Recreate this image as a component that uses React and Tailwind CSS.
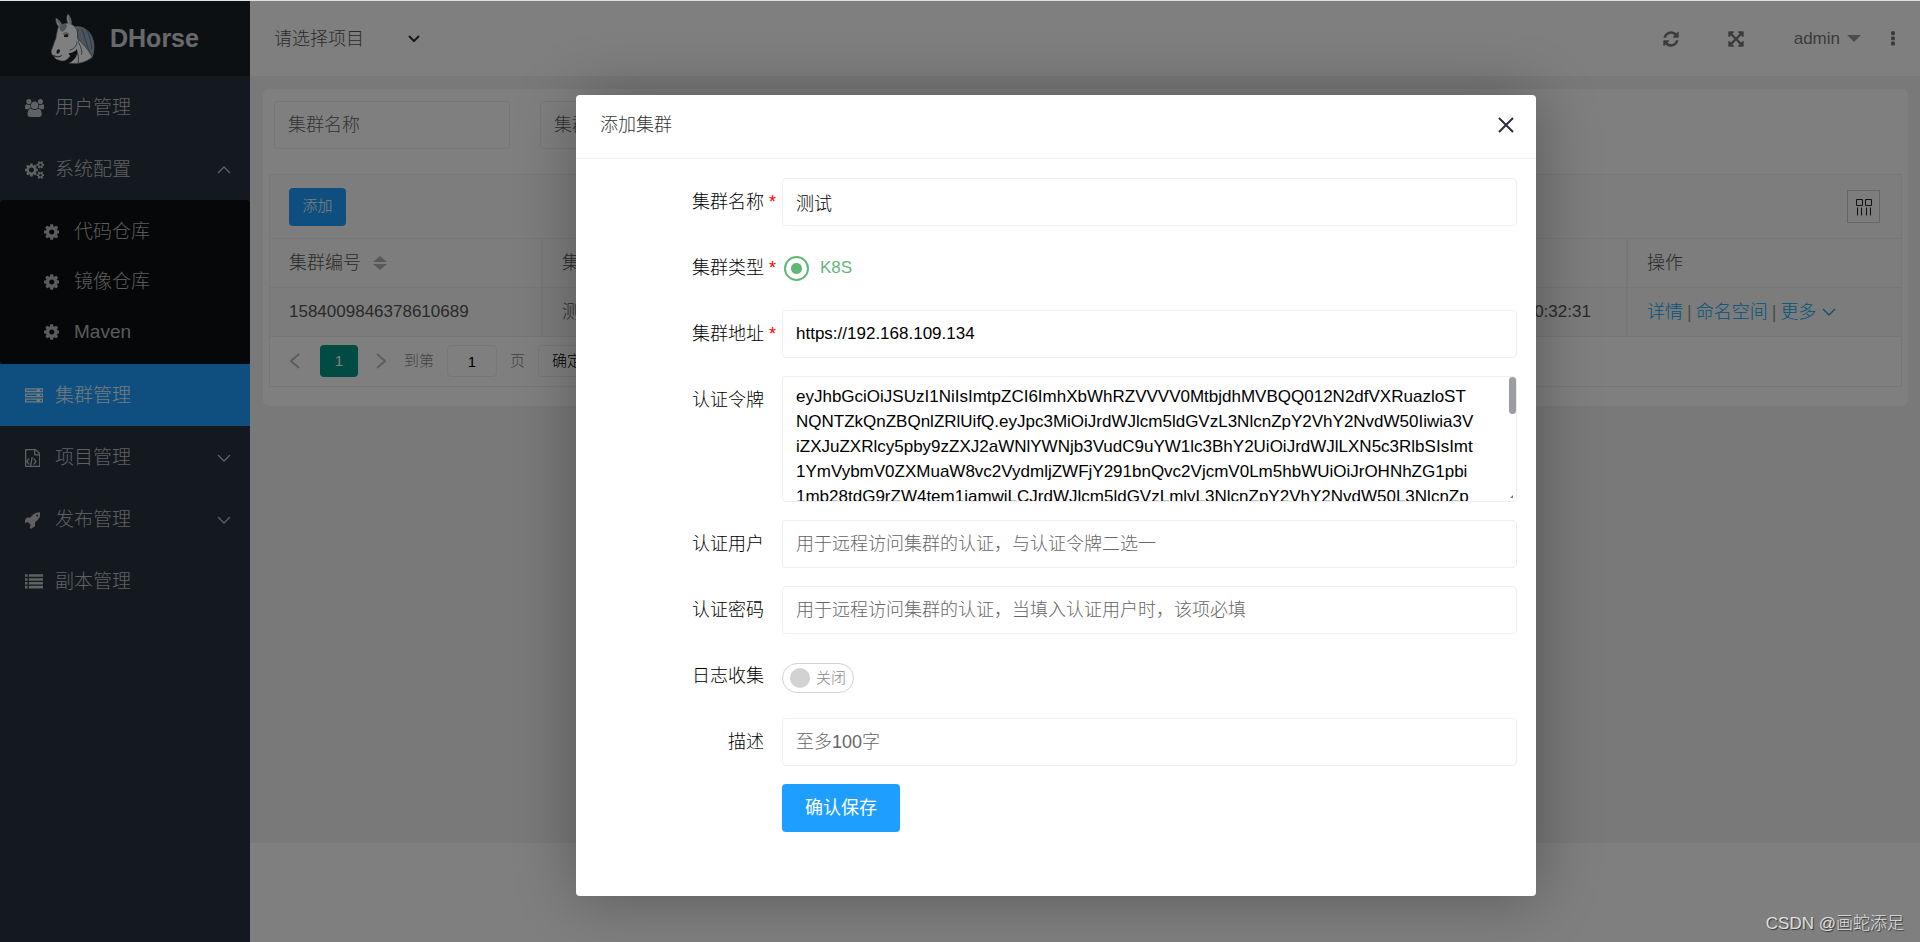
import { useState } from "react";

// ----- icon paths -----
const GEAR = "M1152 896q0-106-75-181t-181-75-181 75-75 181 75 181 181 75 181-75 75-181zm512-109v222q0 12-8 23t-20 13l-185 28q-19 54-39 91 35 50 107 138 10 12 10 25t-9 23q-27 37-99 108t-94 71q-12 0-26-9l-138-108q-44 23-91 38-16 136-29 186-7 28-36 28h-222q-14 0-24.5-8.5t-11.5-21.5l-28-184q-49-16-90-37l-141 107q-10 9-25 9-14 0-25-11-126-114-165-168-7-10-7-23 0-12 8-23 15-21 51-66.5t54-70.5q-27-50-41-99l-183-27q-13-2-21-12.5t-8-23.5v-222q0-12 8-23t19-13l186-28q14-46 39-92-40-57-107-138-10-12-10-24 0-10 9-23 26-36 98.500-107.500t94.500-71.500q13 0 26 10l138 107q44-23 91-38 16-136 29-186 7-28 36-28h222q14 0 24.500 8.500t11.500 21.500l28 184q49 16 90 37l142-107q9-9 24-9 13 0 25 10 129 119 165 170 7 8 7 22 0 12-8 23-15 21-51 66.500t-54 70.500q26 50 41 98l183 28q13 2 21 12.500t8 23.500z";
const COGS = "M896 896q0-106-75-181t-181-75-181 75-75 181 75 181 181 75 181-75 75-181zm768 512q0-52-38-90t-90-38-90 38-38 90q0 53 37.500 90.500t90.500 37.500 90.500-37.500 37.500-90.500zm0-1024q0-52-38-90t-90-38-90 38-38 90q0 53 37.500 90.500t90.500 37.500 90.500-37.500 37.500-90.500zm-384 421v185q0 10-7 19.500t-16 10.500l-155 24q-11 35-32 76 34 48 90 115 7 11 7 20 0 12-7 19-23 30-82.500 89.500t-78.500 59.500q-11 0-21-7l-115-90q-37 19-77 31-11 108-23 155-7 24-30 24h-186q-11 0-20-7.500t-10-17.500l-23-153q-34-10-75-31l-118 89q-7 7-20 7-11 0-21-8-144-133-144-160 0-9 7-19 10-14 41-53t47-61q-23-44-35-82l-152-24q-10-1-17-9.500t-7-19.500v-185q0-10 7-19.500t16-10.500l155-24q11-35 32-76-34-48-90-115-7-11-7-20 0-12 7-20 22-30 82-89t79-59q11 0 21 7l115 90q34-18 77-32 11-108 23-154 7-24 30-24h186q11 0 20 7.500t10 17.500l23 153q34 10 75 31l118-89q8-7 20-7 11 0 21 8 144 133 144 160 0 8-7 19-12 16-42 54t-45 60q23 48 34 82l152 23q10 2 17 10.500t7 19.500zm640 533v140q0 16-149 31-12 27-30 52 51 113 51 138 0 4-4 7-122 71-124 71-8 0-46-47t-52-68q-20 2-30 2t-30-2q-14 21-52 68t-46 47q-2 0-124-71-4-3-4-7 0-25 51-138-18-25-30-52-149-15-149-31v-140q0-16 149-31 13-29 30-52-51-113-51-138 0-4 4-7 4-2 35-20t59-34 30-16q8 0 46 46.500t52 67.500q20-2 30-2t30 2q51-71 92-112l6-2q4 0 124 70 4 3 4 7 0 25-51 138 17 23 30 52 149 15 149 31zm0-1024v140q0 16-149 31-12 27-30 52 51 113 51 138 0 4-4 7-122 71-124 71-8 0-46-47t-52-68q-20 2-30 2t-30-2q-14 21-52 68t-46 47q-2 0-124-71-4-3-4-7 0-25 51-138-18-25-30-52-149-15-149-31v-140q0-16 149-31 13-29 30-52-51-113-51-138 0-4 4-7 4-2 35-20t59-34 30-16q8 0 46 46.500t52 67.500q20-2 30-2t30 2q51-71 92-112l6-2q4 0 124 70 4 3 4 7 0 25-51 138 17 23 30 52 149 15 149 31z";
const USERS = "M593 896q-162 5-265 128h-134q-82 0-138-40.500t-56-118.500q0-353 124-353 6 0 43.500 21t97.500 42.500 119 21.500q67 0 133-23-5 37-5 66 0 139 81 256zm1071 637q0 120-73 189.500t-194 69.500h-874q-121 0-194-69.500t-73-189.500q0-53 3.500-103.500t14-109 26.500-108.500 43-97.500 62-81 85.500-53.500 111.500-20q10 0 43 21.500t73 48 107 48 135 21.500 135-21.500 107-48 73-48 43-21.500q61 0 111.500 20t85.500 53.500 62 81 43 97.500 26.500 108.500 14 109 3.500 103.500zm-1024-1277q0 106-75 181t-181 75-181-75-75-181 75-181 181-75 181 75 75 181zm704 384q0 159-112.500 271.500t-271.500 112.500-271.500-112.500-112.500-271.500 112.500-271.500 271.500-112.500 271.500 112.500 112.500 271.500zm576 225q0 78-56 118.500t-138 40.500h-134q-103-123-265-128 81-117 81-256 0-29-5-66 66 23 133 23 59 0 119-21.500t97.500-42.500 43.500-21q124 0 124 353zm-128-609q0 106-75 181t-181 75-181-75-75-181 75-181 181-75 181 75 75 181z";
const SERVER = "M128 1408h1024v-128h-1024v128zm0-512h1024v-128h-1024v128zm1568 448q0-40-28-68t-68-28-68 28-28 68 28 68 68 28 68-28 28-68zm-1568-960h1024v-128h-1024v128zm1568 448q0-40-28-68t-68-28-68 28-28 68 28 68 68 28 68-28 28-68zm0-512q0-40-28-68t-68-28-68 28-28 68 28 68 68 28 68-28 28-68zm96 832v384h-1792v-384h1792zm0-512v384h-1792v-384h1792zm0-512v384h-1792v-384h1792z";
const FILE_CODE = "M1596 476q28 28 48 76t20 88v1152q0 40-28 68t-68 28h-1344q-40 0-68-28t-28-68v-1600q0-40 28-68t68-28h896q40 0 88 20t76 48zm-444-244v376h376q-10-29-22-41l-313-313q-12-12-41-22zm384 1528v-1024h-416q-40 0-68-28t-28-68v-416h-768v1536h1280zm-1056-736q8-11 21-12.500t24 6.500l51 38q11 8 12.500 21t-6.500 24l-182 243 182 243q8 11 6.500 24t-12.500 21l-51 38q-11 8-24 6.500t-21-12.500l-226-301q-14-19 0-38zm802 301q14 19 0 38l-226 301q-8 11-21 12.500t-24-6.500l-51-38q-11-8-12.500-21t6.500-24l182-243-182-243q-8-11-6.500-24t12.500-21l51-38q11-8 24-6.500t21 12.500zm-620 461q-13-2-20.500-13t-5.500-24l138-831q2-13 13-20.500t24-5.500l63 10q13 2 20.500 13t5.500 24l-138 831q-2 13-13 20.500t-24 5.500z";
const ROCKET = "M1440 448q0-40-28-68t-68-28-68 28-28 68 28 68 68 28 68-28 28-68zm224-288q0 249-75.500 430.500t-253.500 360.500q-81 80-195 176l-20 379q-2 16-16 26l-384 224q-7 4-16 4-12 0-23-9l-64-64q-13-14-8-32l85-276-281-281-276 85q-3 1-9 1-14 0-23-9l-64-64q-17-19-5-39l224-384q10-14 26-16l379-20q96-114 176-195 188-187 358-258t431-71q14 0 24 9.500t10 22.500z";
const LIST = "M0 1280h256v256h-256zM0 896h256v256h-256zM0 512h256v256h-256zM0 128h256v256h-256zM384 1280h1408v256h-1408zM384 896h1408v256h-1408zM384 512h1408v256h-1408zM384 128h1408v256h-1408z";
const REFRESH = "M1639 1056q0 5-1 7-64 268-268 434.500t-478 166.500q-146 0-282.500-55t-243.500-157l-129 129q-19 19-45 19t-45-19-19-45v-448q0-26 19-45t45-19h448q26 0 45 19t19 45-19 45l-137 137q71 66 161 102t187 36q134 0 250-65t186-179q11-17 53-117 8-23 30-23h192q13 0 22.500 9.500t9.500 22.500zm25-800v448q0 26-19 45t-45 19h-448q-26 0-45-19t-19-45 19-45l138-138q-148-137-349-137-134 0-250 65t-186 179q-11 17-53 117-8 23-30 23h-199q-13 0-22.500-9.500t-9.500-22.500v-7q65-268 270-434.500t480-166.500q146 0 284 55.500t245 156.500l130-129q19-19 45-19t45 19 19 45z";
const EXPAND = "M1411 541l-355 355 355 355 144-144q29-31 70-14 39 17 39 59v448q0 26-19 45t-45 19h-448q-42 0-59-40-17-39 14-69l144-144-355-355-355 355 144 144q31 30 14 69-17 40-59 40h-448q-26 0-45-19t-19-45v-448q0-42 40-59 39-17 69 14l144 144 355-355-355-355-144 144q-19 19-45 19-12 0-24-5-40-17-40-59v-448q0-26 19-45t45-19h448q42 0 59 40 17 39-14 69l-144 144 355 355 355-355-144-144q-31-30-14-69 17-40 59-40h448q26 0 45 19t19 45v448q0 42-39 59-13 5-25 5-26 0-45-19z";
const DOTS = "M1088 1248v192q0 40-28 68t-68 28h-192q-40 0-68-28t-28-68v-192q0-40 28-68t68-28h192q40 0 68 28t28 68zm0-512v192q0 40-28 68t-68 28h-192q-40 0-68-28t-28-68v-192q0-40 28-68t68-28h192q40 0 68 28t28 68zm0-512v192q0 40-28 68t-68 28h-192q-40 0-68-28t-28-68v-192q0-40 28-68t68-28h192q40 0 68 28t28 68z";

const TOKEN = `eyJhbGciOiJSUzI1NiIsImtpZCI6ImhXbWhRZVVVV0MtbjdhMVBQQ012N2dfVXRuazloST
NQNTZkQnZBQnlZRlUifQ.eyJpc3MiOiJrdWJlcm5ldGVzL3NlcnZpY2VhY2NvdW50Iiwia3V
iZXJuZXRlcy5pby9zZXJ2aWNlYWNjb3VudC9uYW1lc3BhY2UiOiJrdWJlLXN5c3RlbSIsImt
1YmVybmV0ZXMuaW8vc2VydmljZWFjY291bnQvc2VjcmV0Lm5hbWUiOiJrOHNhZG1pbi
1mb28tdG9rZW4tem1jamwiLCJrdWJlcm5ldGVzLmlvL3NlcnZpY2VhY2NvdW50L3NlcnZp
Y2UtYWNjb3VudC5uYW1lIjoiazhzYWRtaW4tbW9vIiwia3ViZXJuZXRlcy5pby9zZXJ2aWN
lYWNjb3VudC9zZXJ2aWNlLWFjY291bnQudWlkIjoiNmE1ZjQxYjAtZDRlYi00YzI3LWI
5YjQtMWM3ZDI4MGY5ZTRhIiwic3ViIjoic3lzdGVtOnNlcnZpY2VhY2NvdW50Omt1YmUt
c3lzdGVtOms4c2FkbWluLW1vbyJ9.Qk1yZ0hXc2pYb2VfM2tVdHhLd0p6bVZSN3B
MYXZGY0V5dU5iZ1FhS2lTNHJPdGhEMW1Xa0ZzY1lQeEJ2Z0p6UnE3bE5oVWVD
b0lmNXdUZEFtS3JYcDJ5RXZTajhHbkhiUWNMdVpvTWlWdEZrNldhWXhQZ0RzSnI
zQmVOaFVsQ3FUMG1Jdkt5UjlwT2ZYd0VzQWo3Z0hiVm5aY0x1RGlNdEprUTRhWX
BHckZ4U29CZVdobFBDcVU1bVR2SXlOMUtmWGREc1JqOEFnSGJPblpjRXVMaVZ0
TWtZN2FRcEdyV3hGb1NlSmhsQkNxUA`;

function Icon({ d, box = "0 0 1792 1792", className = "size-[18px]" }) {
    return (
        <svg viewBox={box} className={className} fill="currentColor" aria-hidden="true">
            <path d={d} />
        </svg>
    );
}

function Chevron({ className, d = "M1 1l6 6 6-6", box = "0 0 14 8", width = 1.3 }) {
    return (
        <svg viewBox={box} className={className} fill="none" stroke="currentColor" strokeWidth={width} aria-hidden="true">
            <path d={d} />
        </svg>
    );
}

function HorseLogo() {
    return (
        <svg viewBox="150 42 140 156" className="h-[52px] w-[46px]" aria-hidden="true">
            {/* hriva vzadu */}
            <path d="M222 82c30-6 54 14 61 44 4 18 2 38-5 52l-8 4-36-62z" fill="#94abbc" />
            <path d="M246 88c10 22 14 50 30 84M262 92c10 20 14 40 16 60" stroke="#5d7383" strokeWidth="3" fill="none" />
            {/* hlava a krk */}
            <path
                d="M176 82c-6-8-10-18-8-26 8 4 15 12 18 20 6-3 12-4 18-4-4-10-4-20 0-28 8 6 13 20 12 32 14 6 20 22 18 40 12 18 34 36 44 58-16 18-42 22-70 20 12-10 20-16 20-28-12 4-20 8-24 14-8 8-18 8-28 4-8-1-12-5-13-12-8-2-10-10-9-16 6-14 8-26 14-38 2-12 4-26 8-36z"
                fill="#fff"
                stroke="#62727e"
                strokeWidth="2"
            />
            <path d="M180 78c8-5 18-5 22 0-2 10-8 18-16 20-6-4-9-10-6-20z" fill="#94abbc" />
            <path d="M172 62c4 4 8 10 9 16M207 52c4 8 5 16 4 24" stroke="#9aa6ae" strokeWidth="4" fill="none" />
            <path d="M236 90c-4 14-2 28 2 40M232 128c0 14-10 22-22 26M238 132c8 16 10 26 8 36M232 158c4 10 6 20 4 34" stroke="#5d7383" strokeWidth="3" fill="none" />
            <path d="M206 164c14-2 24-8 26-14 4 18-4 32-22 42 4-10 6-18-4-28z" fill="#192027" />
            <ellipse cx="199" cy="110" rx="7" ry="5" fill="#2a343c" />
            <path d="M190 104c6-4 14-3 18 2" stroke="#2a343c" strokeWidth="2" fill="none" />
            <ellipse cx="175" cy="158" rx="5" ry="7" fill="#2a343c" transform="rotate(30 175 158)" />
            <path d="M162 170c8 6 16 6 24 0" stroke="#2a343c" strokeWidth="3" fill="none" />
        </svg>
    );
}

function MenuItem({ icon, box, label, arrow, active }) {
    return (
        <a
            href="#"
            className={
                active
                    ? "flex h-[62px] items-center bg-[#1E9FFF] px-[25px] pt-0.5 text-white/90"
                    : "flex h-[62px] items-center px-[25px] pt-0.5 text-white/70"
            }
        >
            <span className="w-[30px]">
                <Icon d={icon} box={box} className="h-[18px] w-auto" />
            </span>
            <span className="flex-1">{label}</span>
            {arrow === "up" && <Chevron className="mr-[-6px] h-2 w-3.5" d="M1 7l6-6 6 6" />}
            {arrow === "down" && <Chevron className="mr-[-6px] h-2 w-3.5" />}
        </a>
    );
}

function Sidebar() {
    return (
        <aside className="w-[250px] shrink-0 bg-[#28333E] text-[19px]">
            <div className="flex h-[75px] items-center gap-[14px] bg-[#192027] pl-[50px] text-white/80">
                <HorseLogo />
                <h1 className="text-[25px] font-bold">DHorse</h1>
            </div>
            <nav>
                <MenuItem icon={USERS} box="0 0 1920 1792" label="用户管理" />
                <MenuItem icon={COGS} box="0 0 1920 1792" label="系统配置" arrow="up" />
                <div className="rounded-sm bg-black/70 py-[7px]">
                    {["代码仓库", "镜像仓库", "Maven"].map((label) => (
                        <a key={label} href="#" className="flex h-[50px] items-center pl-11 text-white/70">
                            <span className="w-[30px]">
                                <Icon d={GEAR} box="128 0 1536 1792" className="h-[18px] w-auto" />
                            </span>
                            {label}
                        </a>
                    ))}
                </div>
                <MenuItem icon={SERVER} label="集群管理" active />
                <MenuItem icon={FILE_CODE} box="128 96 1536 1792" label="项目管理" arrow="down" />
                <MenuItem icon={ROCKET} box="128 0 1536 1792" label="发布管理" arrow="down" />
                <MenuItem icon={LIST} label="副本管理" />
            </nav>
        </aside>
    );
}

function Header() {
    return (
        <header className="flex h-[75px] items-center justify-between bg-white pr-[18px] pl-6 text-[#333]">
            <div className="relative">
                <select aria-label="请选择项目" className="w-[160px] appearance-none bg-transparent text-lg text-[#555]">
                    <option>请选择项目</option>
                </select>
                <Chevron className="pointer-events-none absolute top-1/2 right-3.5 h-2 w-3 -translate-y-1/2" d="M1 1l5 5 5-5" box="0 0 12 8" width={2} />
            </div>
            <div className="flex items-center text-[#777]">
                <button aria-label="刷新"><Icon d={REFRESH} /></button>
                <button aria-label="全屏" className="ml-[47px]"><Icon d={EXPAND} /></button>
                <button className="ml-[49px] flex items-center gap-[7px] text-[17px]">
                    admin
                    <span className="border-x-[7px] border-t-[7px] border-x-transparent border-t-[#999]" />
                </button>
                <button aria-label="更多操作" className="ml-[23px]"><Icon d={DOTS} /></button>
            </div>
        </header>
    );
}

function ClusterTable() {
    const th = "h-12 border-r-2 border-[#eee] px-[19px] text-left text-lg font-light";
    const td = "h-[49px] border-r-2 border-[#eee] px-[19px]";
    return (
        <div className="mt-[25px] border border-[#eee]">
            <div className="flex h-16 items-center justify-between border-b border-[#eee] bg-[#fafafa] pr-[21px] pl-[19px]">
                <button className="h-[38px] w-[57px] rounded-sm bg-[#1E9FFF] text-[15px] text-white">添加</button>
                <button aria-label="筛选列" className="grid size-[33px] place-items-center border border-[#ccc] text-[#222]">
                    <svg viewBox="0 0 18 18" className="size-[18px]" fill="none" stroke="currentColor" aria-hidden="true">
                        <path d="M1.5 1.500h6v6h-6zM10.500 1.500h6v6h-6zM2.500 9.500v8M6.500 9.500v8M11.500 9.500v8M15.500 9.500v8" />
                    </svg>
                </button>
            </div>
            <table className="w-full table-fixed text-[17px]">
                <thead>
                    <tr className="border-b border-[#eee] bg-[#fafafa]">
                        <th className={`${th} w-[272px]`}>
                            <span className="flex items-center gap-3">
                                集群编号
                                <svg viewBox="0 0 14 14" className="size-3.5" fill="#b2b2b2" aria-hidden="true">
                                    <path d="M7 0l7 6H0zM7 14l7-6H0z" />
                                </svg>
                            </span>
                        </th>
                        <th className={th}>集群名称</th>
                        <th className={th}>集群类型</th>
                        <th className={`${th} w-[214px]`}>创建时间</th>
                        <th className="w-[274px] px-[19px] text-left text-lg font-light">操作</th>
                    </tr>
                </thead>
                <tbody>
                    <tr className="border-b border-[#eee] bg-[#f8f8f8]">
                        <td className={td}>1584009846378610689</td>
                        <td className={`${td} text-lg`}>测试</td>
                        <td className={td}>K8S</td>
                        <td className={`${td} whitespace-nowrap`}>2022-10-23 10:32:31</td>
                        <td className="px-[19px] text-lg text-[#999]">
                            <span className="flex items-center gap-1">
                                <a href="#" className="text-[#01AAED]">详情</a>|
                                <a href="#" className="text-[#01AAED]">命名空间</a>|
                                <a href="#" className="flex items-center gap-1.5 text-[#01AAED]">
                                    更多
                                    <Chevron className="h-2 w-3.5" />
                                </a>
                            </span>
                        </td>
                    </tr>
                </tbody>
            </table>
            <div className="flex h-[49px] items-center pl-5 text-[15px] text-[#888]">
                <button aria-label="上一页" className="text-[#bbb]">
                    <Chevron className="h-4 w-2.5" d="M9 1L1 8l8 7" box="0 0 10 16" width={2} />
                </button>
                <span className="ml-5 grid h-8 w-[38px] place-items-center rounded-sm bg-[#009688] text-white">1</span>
                <button aria-label="下一页" className="ml-[18px] text-[#bbb]">
                    <Chevron className="h-4 w-2.5" d="M1 1l8 7-8 7" box="0 0 10 16" width={2} />
                </button>
                <label htmlFor="page" className="ml-[18px]">到第</label>
                <input id="page" defaultValue="1" className="mx-[13px] h-8 w-[50px] rounded-sm border border-[#eee] bg-white text-center text-black" />
                页
                <button className="ml-[13px] h-8 rounded-sm border border-[#eee] px-[13px] text-black">确定</button>
            </div>
        </div>
    );
}

// ----- jeden riadok formulára -----
function Row({ id, label, required, children }) {
    return (
        <div className="flex">
            <label htmlFor={id} className="relative h-12 w-[206px] shrink-0 pr-[18px] text-right text-lg leading-[48px] text-black">
                {label}
                {required && <span className="absolute top-0 right-1.5 font-normal text-[#f00]">*</span>}
            </label>
            <div className="flex min-h-12 flex-1 items-center">{children}</div>
        </div>
    );
}

function ClusterModal() {
    const [logOn, setLogOn] = useState(false);
    const field = "h-12 w-full rounded-sm border border-[#eee] bg-white px-[13px] text-lg text-black outline-none placeholder:text-[#666]";

    return (
        <div role="dialog" aria-label="添加集群" className="mt-[94px] ml-[30%] h-[801px] w-1/2 rounded-sm bg-white shadow-[1px_1px_62px_rgba(0,0,0,0.3)]">
            <div className="flex h-16 items-center justify-between border-b border-[#eee] pr-[22px] pb-[3px] pl-6 text-lg text-[#333]">
                <h2>添加集群</h2>
                <button aria-label="关闭">
                    <svg viewBox="0 0 16 16" className="size-4" stroke="#2E2D3C" strokeWidth="2" aria-hidden="true">
                        <path d="M1 1l14 14M15 1L1 15" />
                    </svg>
                </button>
            </div>
            <form className="flex flex-col gap-[18px] pt-[19px] pr-[19px]" onSubmit={(e) => e.preventDefault()}>
                <Row id="name" label="集群名称" required>
                    <input id="name" defaultValue="测试" className={field} />
                </Row>
                <Row id="k8s" label="集群类型" required>
                    <input
                        id="k8s"
                        type="radio"
                        name="type"
                        defaultChecked
                        className="ml-0.5 size-[25px] appearance-none rounded-full border-2 border-[#5FB878] bg-white bg-[radial-gradient(circle,#5FB878_5px,transparent_6px)]"
                    />
                    <label htmlFor="k8s" className="ml-[11px] text-[17px] text-[#5FB878]">K8S</label>
                </Row>
                <Row id="address" label="集群地址" required>
                    <input id="address" defaultValue="https://192.168.109.134" className="h-12 w-full rounded-sm border border-[#eee] bg-white px-[13px] text-[17px] text-black outline-none" />
                </Row>
                <Row id="token" label="认证令牌">
                    <div className="relative w-full">
                        <textarea
                            id="token"
                            defaultValue={TOKEN}
                            className="block h-[126px] w-full resize-none overflow-y-auto rounded-sm border border-[#eee] px-[13px] py-[7px] text-[17px] leading-[25px] whitespace-pre text-black outline-none [scrollbar-width:none]"
                        />
                        <span className="pointer-events-none absolute top-px right-px h-[37px] w-[7px] rounded-full bg-[#9c9da0]" />
                        <span className="pointer-events-none absolute right-1 bottom-1 size-[3px] bg-[#777] [clip-path:polygon(100%_0,100%_100%,0_100%)]" />
                    </div>
                </Row>
                <Row id="user" label="认证用户">
                    <input id="user" placeholder="用于远程访问集群的认证，与认证令牌二选一" className={field} />
                </Row>
                <Row id="password" label="认证密码">
                    <input id="password" type="password" placeholder="用于远程访问集群的认证，当填入认证用户时，该项必填" className={field} />
                </Row>
                <Row id="log" label="日志收集">
                    <button
                        id="log"
                        type="button"
                        role="switch"
                        aria-checked={logOn}
                        onClick={() => setLogOn(!logOn)}
                        className="mt-1 flex h-[30px] w-[72px] items-center gap-1.5 rounded-full border border-[#d2d2d2] pl-[7px] text-[15px] text-[#888]"
                    >
                        <span className="size-5 rounded-full bg-[#d2d2d2]" />
                        {logOn ? "开启" : "关闭"}
                    </button>
                </Row>
                <Row id="desc" label="描述">
                    <input id="desc" placeholder="至多100字" className={field} />
                </Row>
                <button className="ml-[206px] h-12 w-[118px] rounded-sm bg-[#1E9FFF] text-lg font-normal text-white">确认保存</button>
            </form>
        </div>
    );
}

export default function App() {
    return (
        <div className="relative flex min-h-screen border-t border-[#dde3e1] bg-white font-['Liberation_Sans','Noto_Sans_CJK_SC',sans-serif] font-light">
            <Sidebar />
            <div className="flex min-w-0 flex-1 flex-col">
                <Header />
                <main className="mb-[99px] flex-1 bg-[#f2f2f2] pt-[13px] pr-3 pl-[13px] text-[#555]">
                    <section className="rounded-md bg-white px-1.5 pt-3 pb-[19px]">
                        <div className="flex gap-[30px] pl-[5px] text-lg">
                            <input aria-label="集群名称" placeholder="集群名称" className="h-12 w-[236px] rounded-sm border border-[#eee] px-[13px] placeholder:text-[#666]" />
                            <input aria-label="集群类型" placeholder="集群类型" className="h-12 w-[236px] rounded-sm border border-[#eee] px-[13px] placeholder:text-[#666]" />
                        </div>
                        <ClusterTable />
                    </section>
                </main>
            </div>

            {/* tmavá maska s oknom */}
            <div className="absolute inset-0 z-50 bg-black/50">
                <ClusterModal />
            </div>
            <p className="absolute right-4 bottom-1.5 z-50 text-[17px] text-white/80 [text-shadow:1px_1px_1px_rgba(0,0,0,0.6)]">
                CSDN @画蛇添足
            </p>
        </div>
    );
}
